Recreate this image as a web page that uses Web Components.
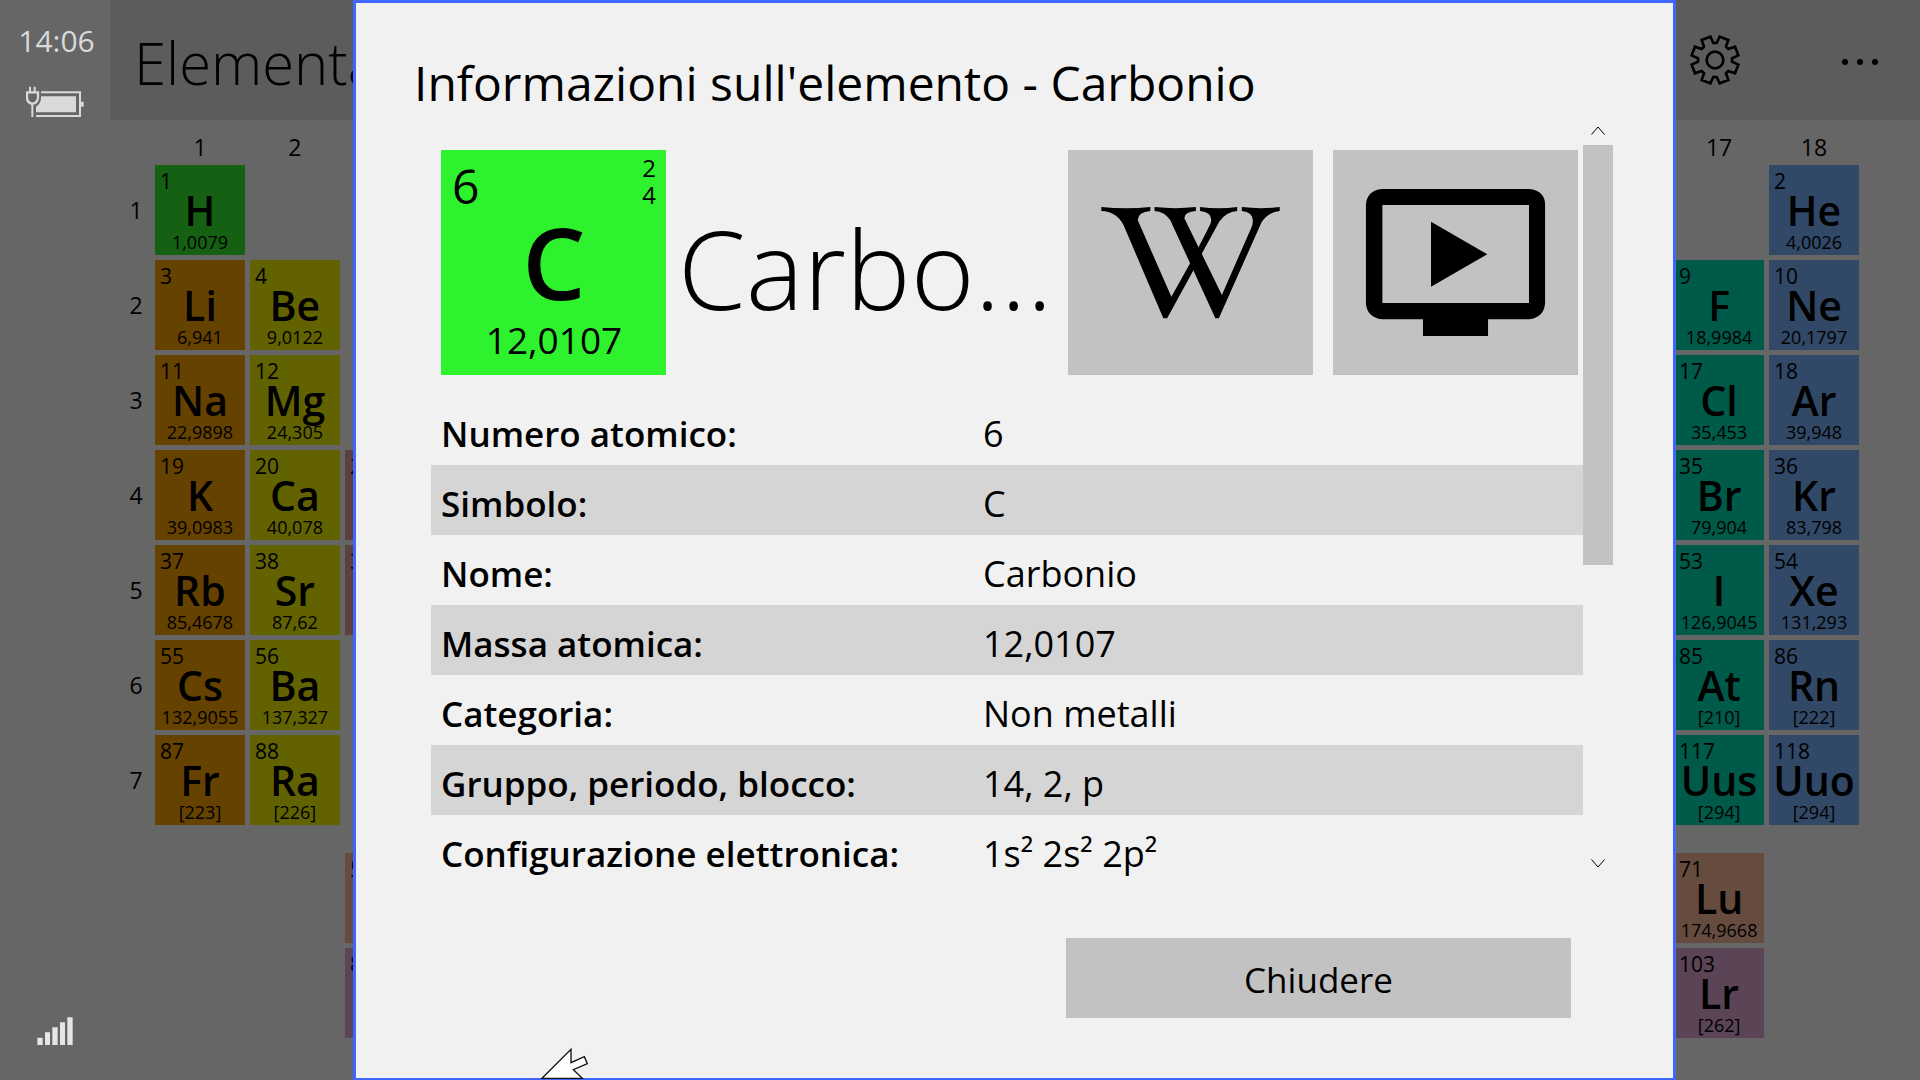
<!DOCTYPE html>
<html lang="it">
<head>
<meta charset="utf-8">
<title>Informazioni sull'elemento</title>
<style>
html,body{height:100%;margin:0}
body{background:#666;color:#000;font-family:"Open Sans","Noto Sans",sans-serif;overflow:hidden}
</style>
</head>
<body>
<app-shell></app-shell>
<script>
const define = (name, html, setup) => customElements.define(name, class extends HTMLElement {
  constructor() {
    super();
    this.attachShadow({mode: 'open'});
  }
  connectedCallback() {
    const t = document.createElement('template');
    t.innerHTML = html;
    this.shadowRoot.replaceChildren(t.content.cloneNode(true));
    if (setup) setup(this, this.shadowRoot);
  }
});

define('system-bar', `
<style>
:host{display:flex;flex-direction:column;align-items:center;box-sizing:border-box;height:100%;padding:20px 0 35px;color:#d9d9d9}
time{font-size:30px;line-height:41px;padding-left:3px}
.battery{width:58px;height:32px;margin-top:25px}
.signal{width:36px;height:28px;margin-top:auto}
</style>
<time>14:06</time>
<svg class="battery" viewBox="75 260 174 96" aria-label="Batteria in carica">
  <path d="M120 279H237V350H105" fill="none" stroke="#d9d9d9" stroke-width="6"/>
  <path d="M240 307h8v15h-8zM120 291H225V339H105V322Q119 314 120 297ZM84 262h6v18h-6zM98 262h6v18h-6zM91 311h6v42h-6z" fill="#d9d9d9"/>
  <path d="M78 279H111V295Q109 312 95 313Q79 312 78 295Z" fill="none" stroke="#d9d9d9" stroke-width="7"/>
</svg>
<svg class="signal" viewBox="111 170 108 84" aria-label="Segnale">
  <path d="M112 232h16v22h-16zM135 216h15v38h-15zM157 201h16v53h-16zM180 186h15v68h-15zM202 171h16v83h-16z" fill="#e6e6e6"/>
</svg>`);

define('app-header', `
<style>
:host{display:flex;align-items:center;box-sizing:border-box;height:120px;padding:0 40px 0 24px;background:#5c5c5c}
h1{flex:1;margin:0;font-size:58px;line-height:80px;font-weight:350;padding-top:6px}
button{display:flex;border:0;background:none;padding:0;color:inherit}
.more{margin-left:100px}
</style>
<h1>Elementa</h1>
<button aria-label="Impostazioni"><svg width="50" height="50" viewBox="-75 -75 150 150" fill="none" stroke="#000" stroke-width="8">
<circle r="25"/>
<path d="M-14-70L-5-51H5L14-70L40-60L33-40L40-33L60-40L70-14L51-5V5L70 14L60 40L40 33L33 40L40 60L14 70L5 51H-5L-14 70L-40 60L-33 40L-40 33L-60 40L-70 14L-51 5V-5L-70-14L-60-40L-40-33L-33-40L-40-60Z"/></svg></button>
<button class="more" aria-label="Altro"><svg width="40" height="10" viewBox="0 0 40 10"><circle cx="5" cy="7" r="3"/><circle cx="20" cy="7" r="3"/><circle cx="35" cy="7" r="3"/></svg></button>`);

define('element-cell', `
<style>
:host{display:grid;grid-template-rows:30px 30px 30px;height:90px;min-width:0;text-align:center;background:var(--tile)}
span{white-space:nowrap}
.n{font-size:21px;line-height:32px;text-align:left;padding-left:5px}
.s{font-size:41px;line-height:30px;font-weight:600;display:flex;justify-content:center}
.m{font-size:18px;line-height:34px}
</style>
<span class="n"></span><span class="s"></span><span class="m"></span>`,
(host, root) => {
  const [n, s, m] = host.getAttribute('data').split('|');
  root.querySelector('.n').textContent = n;
  root.querySelector('.s').textContent = s;
  root.querySelector('.m').textContent = m;
});

define('periodic-table', `
<style>
:host{display:grid;grid-template-columns:28px repeat(18,1fr);grid-template-rows:31px repeat(7,90px) 18px repeat(2,90px);gap:5px;padding:9px 61px 0 12px}
.h{font-size:23px;line-height:36px;text-align:center}
.p{font-size:23px;line-height:90px;text-align:center}
</style>`,
(host, root) => {
  const kinds = {alkali: '#664200', earth: '#626200', nonmetal: '#156012', halogen: '#005a49', noble: '#314867', metal: '#5c3f3f', lanth: '#664b3f', act: '#5a4456'};
  const put = (el, col, row) => {
    el.style.gridColumn = col + 1;
    el.style.gridRow = row + 1;
    root.append(el);
  };
  const label = (text, cls, col, row) => {
    const d = document.createElement('div');
    d.className = cls;
    d.textContent = text;
    put(d, col, row);
  };
  [1, 2, 17, 18].forEach(c => label(c, 'h', c, 0));
  [1, 2, 3, 4, 5, 6, 7].forEach(r => label(r, 'p', 0, r));
  [
    [1, 1, 'nonmetal', '1|H|1,0079'], [1, 2, 'alkali', '3|Li|6,941'], [1, 3, 'alkali', '11|Na|22,9898'],
    [1, 4, 'alkali', '19|K|39,0983'], [1, 5, 'alkali', '37|Rb|85,4678'], [1, 6, 'alkali', '55|Cs|132,9055'],
    [1, 7, 'alkali', '87|Fr|[223]'],
    [2, 2, 'earth', '4|Be|9,0122'], [2, 3, 'earth', '12|Mg|24,305'], [2, 4, 'earth', '20|Ca|40,078'],
    [2, 5, 'earth', '38|Sr|87,62'], [2, 6, 'earth', '56|Ba|137,327'], [2, 7, 'earth', '88|Ra|[226]'],
    [3, 4, 'metal', '21|Sc|44,9559'], [3, 5, 'metal', '39|Y|88,9059'],
    [3, 9, 'lanth', '57|La|138,9055'], [3, 10, 'act', '89|Ac|[227]'],
    [17, 2, 'halogen', '9|F|18,9984'], [17, 3, 'halogen', '17|Cl|35,453'], [17, 4, 'halogen', '35|Br|79,904'],
    [17, 5, 'halogen', '53|I|126,9045'], [17, 6, 'halogen', '85|At|[210]'], [17, 7, 'halogen', '117|Uus|[294]'],
    [17, 9, 'lanth', '71|Lu|174,9668'], [17, 10, 'act', '103|Lr|[262]'],
    [18, 1, 'noble', '2|He|4,0026'], [18, 2, 'noble', '10|Ne|20,1797'], [18, 3, 'noble', '18|Ar|39,948'],
    [18, 4, 'noble', '36|Kr|83,798'], [18, 5, 'noble', '54|Xe|131,293'], [18, 6, 'noble', '86|Rn|[222]'],
    [18, 7, 'noble', '118|Uuo|[294]']
  ].forEach(([c, r, kind, data]) => {
    const el = document.createElement('element-cell');
    el.setAttribute('data', data);
    el.style.setProperty('--tile', kinds[kind]);
    put(el, c, r);
  });
});

define('element-card', `
<style>
:host{display:flex;flex-direction:column;box-sizing:border-box;width:225px;height:225px;padding:4px 10px 10px 11px;background:#2ff22f}
.top{display:flex;justify-content:space-between;height:57px}
.n{font-size:48px;line-height:64px}
.shells{font-size:24px;line-height:27px;text-align:right}
.shells span{display:block}
.s{font-size:100px;line-height:100px;font-weight:600;text-align:center}
.m{font-size:37px;line-height:58px;text-align:center}
</style>
<div class="top"><span class="n">6</span><div class="shells"><span>2</span><span>4</span></div></div>
<div class="s">C</div>
<div class="m">12,0107</div>`);

define('link-tile', `
<style>
:host{display:block;width:245px;height:225px}
button{display:block;width:100%;height:100%;border:0;padding:0;background:#c2c2c2}
::slotted(svg){display:block;width:100%;height:100%}
</style>
<button><slot></slot></button>`,
(host, root) => root.querySelector('button').setAttribute('aria-label', host.getAttribute('label')));

define('element-properties', `
<style>
:host{display:block}
table{width:100%;border-collapse:collapse;table-layout:fixed;line-height:50px}
th,td{height:70px;padding:8px 0 0 10px;box-sizing:border-box;text-align:left;white-space:nowrap}
th{width:542px;font-size:35px;font-weight:600}
td{font-size:36px;font-weight:400}
tr:nth-child(even){background:#d5d5d5}
</style>
<table><tbody>
<tr><th scope="row">Numero atomico:</th><td>6</td></tr>
<tr><th scope="row">Simbolo:</th><td>C</td></tr>
<tr><th scope="row">Nome:</th><td>Carbonio</td></tr>
<tr><th scope="row">Massa atomica:</th><td>12,0107</td></tr>
<tr><th scope="row">Categoria:</th><td>Non metalli</td></tr>
<tr><th scope="row">Gruppo, periodo, blocco:</th><td>14, 2, p</td></tr>
<tr><th scope="row">Configurazione elettronica:</th><td>1s² 2s² 2p²</td></tr>
</tbody></table>`);

define('scroll-rail', `
<style>
:host{display:flex;flex-direction:column;width:30px}
button{display:flex;align-items:center;justify-content:center;height:30px;border:0;padding:0;background:none}
.track{flex:1}
.thumb{height:420px;background:#c2c2c2}
</style>
<button aria-label="Scorri su"><svg width="14" height="9" viewBox="0 0 14 9" fill="none" stroke="#000"><path d="M0.5 8.5L7 1L13.5 8.5"/></svg></button>
<div class="track"><div class="thumb"></div></div>
<button aria-label="Scorri giù"><svg width="14" height="9" viewBox="0 0 14 9" fill="none" stroke="#000"><path d="M0.5 0.5L7 8L13.5 0.5"/></svg></button>`);

define('info-dialog', `
<style>
:host{display:flex;flex-direction:column;box-sizing:border-box;height:100%;border:3px solid #3f66ff;border-bottom-width:2px;background:#f1f1f1}
h2{margin:0;height:112px;box-sizing:border-box;padding:45px 60px 0 58px;font-size:48px;line-height:70px;font-weight:400;white-space:nowrap}
.body{display:flex;flex:1;min-height:0;padding:0 60px 0 75px}
.content{flex:1;min-width:0;overflow:hidden;padding-top:35px;box-sizing:border-box}
.summary{display:flex;padding:0 5px 20px 10px}
.name{flex:1;min-width:0;padding-left:12px;font-size:109px;line-height:235px;height:225px;font-weight:300;white-space:nowrap}
.links{display:flex;gap:20px}
footer{display:flex;justify-content:flex-end;padding:60px 102px 60px 60px}
footer button{width:505px;height:80px;border:0;background:#c2c2c2;color:#000;font:400 35px/76px "Open Sans","Noto Sans",sans-serif;padding:4px 0 0}
</style>
<h2>Informazioni sull'elemento - Carbonio</h2>
<div class="body">
  <div class="content">
    <div class="summary">
      <element-card></element-card>
      <div class="name" title="Carbonio">Carbo…</div>
      <div class="links">
        <link-tile label="Wikipedia"><svg viewBox="73 90 640 675" preserveAspectRatio="none">
          <path d="M160 261Q225 269 288 261V273Q256 276 255 300L343 530L392 430L413 384L445 312Q455 278 418 273V261Q468 269 515 261V273Q485 276 468 305L422 402L400 452L332 595H322L218 315Q200 275 160 273Z"/>
          <path d="M299 261Q355 268 407 261V273Q376 276 377 295L475 525L553 320Q565 278 527 273V261Q577 268 626 261V273Q595 276 578 308L467 595H458L340 300Q325 275 299 273Z"/>
        </svg></link-tile>
        <link-tile label="Video"><svg viewBox="766 90 640 675" preserveAspectRatio="none">
          <path fill-rule="evenodd" d="M894 207H1278Q1320 212 1320 255V549Q1318 592 1278 598H1171V648H1001V598H894Q854 592 852 549V255Q854 212 894 207ZM895 255V549H1278V255ZM1022 305L1169 403L1022 500Z"/>
        </svg></link-tile>
      </div>
    </div>
    <element-properties></element-properties>
  </div>
  <scroll-rail></scroll-rail>
</div>
<footer><button>Chiudere</button></footer>`);

define('app-shell', `
<style>
:host{display:grid;grid-template-columns:110px 1fr;height:100vh;position:relative;overflow:hidden}
main{min-width:0}
.overlay{position:absolute;inset:0 244px 0 353px}
.pointer{position:absolute;left:540px;bottom:0;width:50px;height:34px}
</style>
<system-bar></system-bar>
<main><app-header></app-header><periodic-table></periodic-table></main>
<div class="overlay"><info-dialog role="dialog" aria-modal="true"></info-dialog></div>
<svg class="pointer" viewBox="120 78 150 102"><path d="M126 175L213 88V128L253 110L262 131L220 149L247 175Z" fill="#fff" stroke="#111" stroke-width="4"/></svg>`);
</script>
</body>
</html>
